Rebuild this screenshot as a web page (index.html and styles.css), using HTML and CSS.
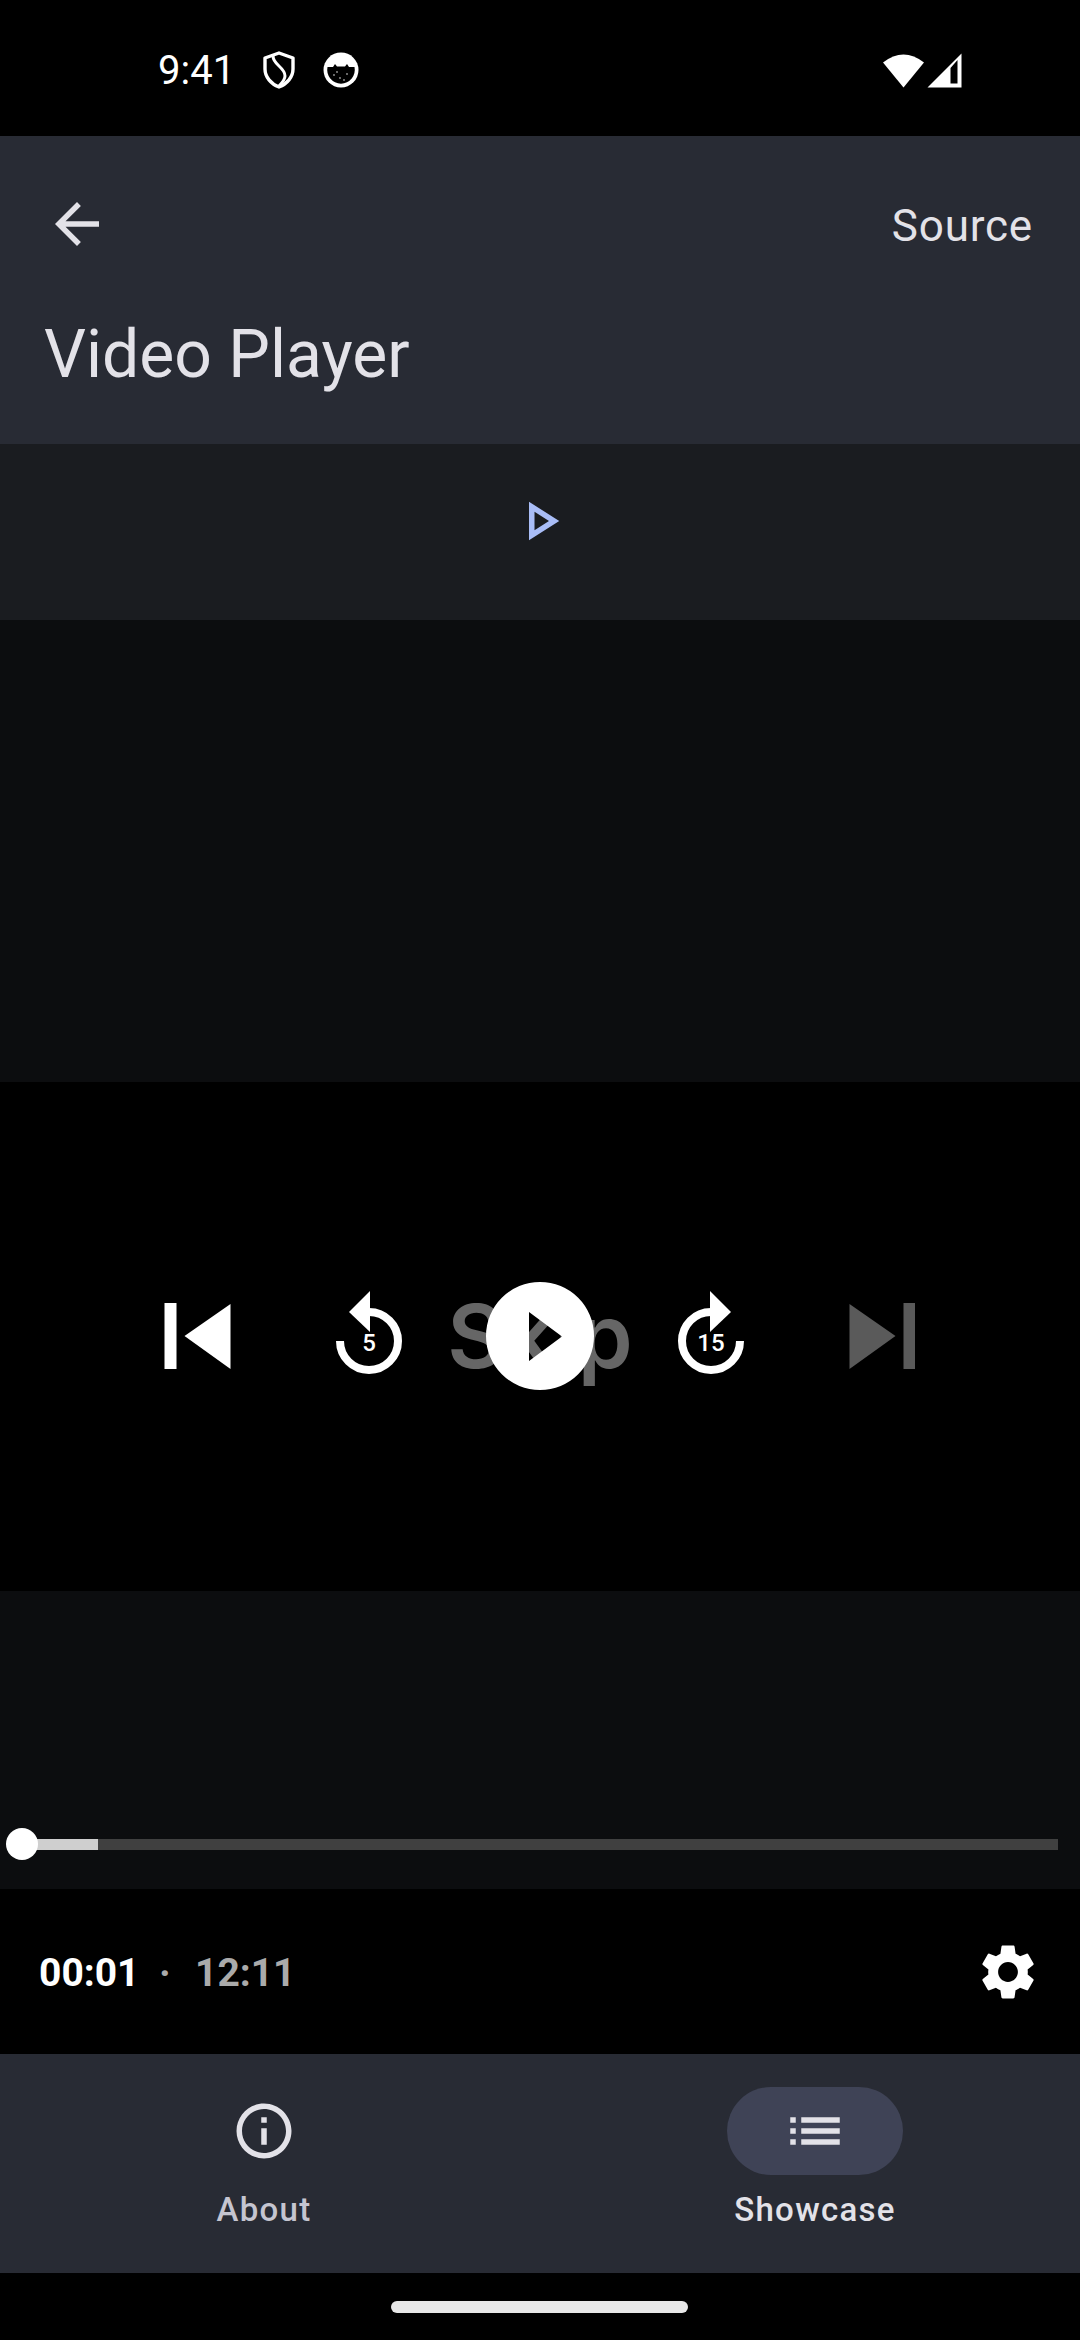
FILE: index.html
```html
<!DOCTYPE html>
<html>
<head>
    <title>Video Player</title>
    <meta charset="utf-8">
    <link rel="stylesheet" href="styles.css">
</head>
<body>
    <div class="screen">
        <div class="status-bar">
            <span class="clock">9:41</span>
            <svg class="shield" width="32" height="38" viewBox="0 0 32 38">
                <path d="M16 2 L30 7 V18 C30 26 24 33 16 36 C8 33 2 26 2 18 V7 Z" fill="none" stroke="#fff" stroke-width="3.4" stroke-linejoin="round"/>
                <path d="M10 5 C10 14 22 16 22 25 C22 29 19 32 16 35" fill="none" stroke="#fff" stroke-width="3"/>
            </svg>
            <svg class="cat" width="36" height="36" viewBox="0 0 36 36">
                <circle cx="18" cy="18" r="17.5" fill="#fff"/>
                <path d="M4.500 15 H10 L12 12 L14 14.500 H22 L24 12 L26 15 H31.500 A13.800 13.800 0 1 1 4.500 15 Z" fill="#000"/>
                <circle cx="11" cy="23" r="0.9" fill="#999"/>
                <circle cx="17" cy="26" r="0.9" fill="#999"/>
                <circle cx="24" cy="22" r="0.9" fill="#999"/>
                <circle cx="21" cy="28" r="0.9" fill="#999"/>
                <circle cx="14" cy="20" r="0.9" fill="#999"/>
            </svg>
            <div class="status-right">
                <svg width="42" height="35" viewBox="0 0 42 35">
                    <path d="M20.500 34.500 L0 9.500 Q20.500 -6.500 41 9.500 Z" fill="#fff"/>
                </svg>
                <svg width="35" height="35" viewBox="0 0 35 35">
                    <path d="M34.500 0.500 V34.500 H0.500 Z M23.500 15 V30.500 H30.500 V7 Z" fill="#fff" fill-rule="evenodd"/>
                </svg>
            </div>
        </div>

        <div class="app-bar">
            <div class="app-bar-top">
                <svg class="back" width="66" height="66" viewBox="0 0 24 24">
                    <path d="M20 11H7.830l5.590-5.590L12 4l-8 8 8 8 1.410-1.410L7.830 13H20v-2z" fill="#e3e2e8"/>
                </svg>
                <span class="source">Source</span>
            </div>
            <h1 class="title">Video Player</h1>
        </div>

        <div class="tab-band">
            <svg width="66" height="66" viewBox="0 0 24 24">
                <path d="M10 8.640L15.270 12 10 15.360V8.640M8 5v14l11-7L8 5z" fill="#a9bdf7"/>
            </svg>
        </div>

        <div class="video-dim video-top"></div>

        <div class="video-controls">
            <svg class="ctl" viewBox="0 0 90 90">
                <rect x="11.500" y="12" width="12" height="66" fill="#fff"/>
                <path d="M77.500 13 V78 L31.500 45 Z" fill="#fff"/>
            </svg>
            <svg class="ctl" viewBox="0 0 90 90">
                <path d="M16 50 A29 29 0 1 0 45 21" fill="none" stroke="#fff" stroke-width="8"/>
                <path d="M25 21 L46 0 V41 Z" fill="#fff"/>
                <text class="ctl-num" x="45" y="60">5</text>
            </svg>
            <div class="ctl play-slot">
                <span class="skip-label">Skip</span>
                <!-- the triangle is a hole, the label shows through it -->
                <svg class="play-btn" viewBox="0 0 108 108">
                    <path d="M54 0 A54 54 0 1 1 54 108 A54 54 0 1 1 54 0 Z M43 30 V79 L76 54.500 Z" fill="#fff" fill-rule="evenodd"/>
                </svg>
            </div>
            <svg class="ctl" viewBox="0 0 90 90">
                <path d="M74 50 A29 29 0 1 1 45 21" fill="none" stroke="#fff" stroke-width="8"/>
                <path d="M65 21 L44 0 V41 Z" fill="#fff"/>
                <text class="ctl-num" x="45" y="60">15</text>
            </svg>
            <svg class="ctl" viewBox="0 0 90 90">
                <path d="M11.500 13 V78 L57.500 45 Z" fill="#5a5a5a"/>
                <rect x="65.500" y="12" width="11.500" height="66" fill="#5a5a5a"/>
            </svg>
        </div>

        <div class="video-dim video-bottom">
            <div class="seek">
                <div class="seek-fill"></div>
                <div class="seek-thumb"></div>
            </div>
        </div>

        <div class="time-row">
            <span class="time-now">00:01</span>
            <span class="time-dot">·</span>
            <span class="time-total">12:11</span>
            <svg class="gear" width="66" height="66" viewBox="0 0 24 24">
                <path d="M19.140 12.940c.04-.3.06-.61.06-.94 0-.32-.02-.64-.07-.94l2.030-1.580c.18-.14.23-.41.12-.61l-1.920-3.320c-.12-.22-.37-.29-.59-.22l-2.390.96c-.5-.38-1.030-.7-1.620-.94l-.36-2.540c-.04-.24-.24-.41-.48-.41h-3.840c-.24 0-.43.17-.47.41l-.36 2.540c-.59.24-1.130.57-1.620.94l-2.390-.96c-.22-.08-.47 0-.59.22L2.740 8.870c-.12.21-.08.47.12.61l2.030 1.580c-.05.3-.09.63-.09.94s.02.64.07.94l-2.030 1.580c-.18.14-.23.41-.12.61l1.920 3.320c.12.22.37.29.59.22l2.390-.96c.5.38 1.030.7 1.620.94l.36 2.540c.05.24.24.41.48.41h3.840c.24 0 .44-.17.47-.41l.36-2.540c.59-.24 1.130-.56 1.620-.94l2.390.96c.22.08.47 0 .59-.22l1.920-3.320c.12-.22.07-.47-.12-.61l-2.010-1.580zM12 15.600c-1.980 0-3.600-1.620-3.600-3.600s1.620-3.600 3.600-3.600 3.600 1.620 3.600 3.600-1.620 3.600-3.600 3.600z" fill="#fff"/>
            </svg>
        </div>

        <div class="nav-bar">
            <div class="nav-item">
                <div class="nav-icon">
                    <svg width="66" height="66" viewBox="0 0 24 24">
                        <path d="M11 7h2v2h-2zm0 4h2v6h-2zm1-9C6.480 2 2 6.480 2 12s4.480 10 10 10 10-4.480 10-10S17.520 2 12 2zm0 18c-4.410 0-8-3.590-8-8s3.590-8 8-8 8 3.590 8 8-3.590 8-8 8z" fill="#e3e2e8"/>
                    </svg>
                </div>
                <span class="nav-label nav-label-off">About</span>
            </div>
            <div class="nav-item">
                <div class="nav-icon nav-icon-on">
                    <svg width="66" height="66" viewBox="0 0 24 24">
                        <path d="M3 13h2v-2H3v2zm0 4h2v-2H3v2zm0-8h2V7H3v2zm4 4h14v-2H7v2zm0 4h14v-2H7v2zM7 7v2h14V7H7z" fill="#e3e2e8"/>
                    </svg>
                </div>
                <span class="nav-label">Showcase</span>
            </div>
        </div>

        <div class="gesture-bar">
            <div class="gesture-pill"></div>
        </div>
    </div>
</body>
</html>
```

FILE: styles.css
```css
html, body {
    margin: 0;
    padding: 0;
    background: #000;
}
.screen {
    width: 1080px;
    height: 2340px;
    overflow: hidden;
    font-family: Roboto, "Liberation Sans", sans-serif;
    color: #fff;
    background: #000;
}

/* status bar */
.status-bar {
    height: 136px;
    display: flex;
    align-items: center;
    padding: 4px 118px 0 158px;
    box-sizing: border-box;
}
.clock {
    font-size: 40px;
    width: 105px;
    margin-top: 1px;
}
.shield {
    margin-right: 28px;
}
.status-right {
    margin-left: auto;
    display: flex;
    gap: 2px;
}

/* top app bar */
.app-bar {
    height: 308px;
    background: #282b34;
    box-sizing: border-box;
}
.app-bar-top {
    height: 176px;
    display: flex;
    align-items: center;
    justify-content: space-between;
    padding: 0 47px 0 44px;
}
.source {
    font-size: 44px;
    letter-spacing: 0.800px;
    margin-top: 3px;
    color: #e3e2e8;
}
.title {
    margin: 7px 0 0 0;
    padding-left: 44px;
    font-size: 66px;
    font-weight: 400;
    line-height: 72px;
    color: #e3e2e8;
}

/* band under the app bar */
.tab-band {
    height: 176px;
    background: #1a1c20;
    box-sizing: border-box;
    padding: 44px 0 0 507px;
}
.video-dim {
    background: #0c0d0f;
}
.video-top {
    height: 462px;
}

/* player buttons */
.video-controls {
    height: 509px;
    padding-bottom: 1px;
    box-sizing: border-box;
    display: flex;
    align-items: center;
    justify-content: center;
    gap: 81.250px;
}
.ctl {
    width: 90px;
    height: 90px;
    flex: none;
}
.ctl-num {
    font-family: Roboto, sans-serif;
    font-size: 24px;
    font-weight: 500;
    fill: #fff;
    text-anchor: middle;
}
.play-slot {
    position: relative;
}
.skip-label {
    position: absolute;
    left: 50%;
    top: 50%;
    transform: translate(-50%, -50%);
    font-family: Inter, sans-serif;
    font-size: 88px;
    font-weight: 600;
    color: #666;
}
.play-btn {
    position: absolute;
    left: -9px;
    top: -9px;
    width: 108px;
    height: 108px;
}

/* seek bar */
.video-bottom {
    height: 298px;
    padding: 248px 22px 0 22px;
    box-sizing: border-box;
}
.seek {
    position: relative;
    height: 11px;
    background: #404040;
}
.seek-fill {
    width: 76px;
    height: 11px;
    background: #cfcfcf;
}
.seek-thumb {
    position: absolute;
    left: -16px;
    top: -11px;
    width: 32px;
    height: 32px;
    border-radius: 50%;
    background: #fff;
}

/* time row */
.time-row {
    height: 165px;
    display: flex;
    align-items: center;
    padding: 0 39px;
    box-sizing: border-box;
    font-size: 39px;
    font-weight: 700;
}
.time-now, .time-dot, .time-total {
    margin-top: 3px;
}
.time-now {
    width: 120px;
}
.time-dot {
    width: 36px;
    color: #aaa;
}
.time-total {
    color: #aaa;
}
.gear {
    margin-left: auto;
}

/* bottom navigation */
.nav-bar {
    height: 219px;
    background: #282b34;
    display: flex;
    justify-content: space-between;
    padding: 33px 177px 0 176px;
    box-sizing: border-box;
}
.nav-item {
    width: 176px;
    display: flex;
    flex-direction: column;
    align-items: center;
}
.nav-icon {
    width: 176px;
    height: 88px;
    border-radius: 44px;
    display: flex;
    align-items: center;
    justify-content: center;
}
.nav-icon-on {
    background: #3f4356;
}
.nav-label {
    margin-top: 13px;
    font-size: 33px;
    font-weight: 500;
    line-height: 44px;
    letter-spacing: 1.300px;
    white-space: nowrap;
    color: #e3e2e8;
}
.nav-label-off {
    color: #c5c5d0;
}

/* gesture handle */
.gesture-bar {
    height: 67px;
    box-sizing: border-box;
    padding-top: 28px;
}
.gesture-pill {
    width: 297px;
    height: 12px;
    margin-left: 391px;
    border-radius: 6px;
    background: #e8e8e8;
}
```
